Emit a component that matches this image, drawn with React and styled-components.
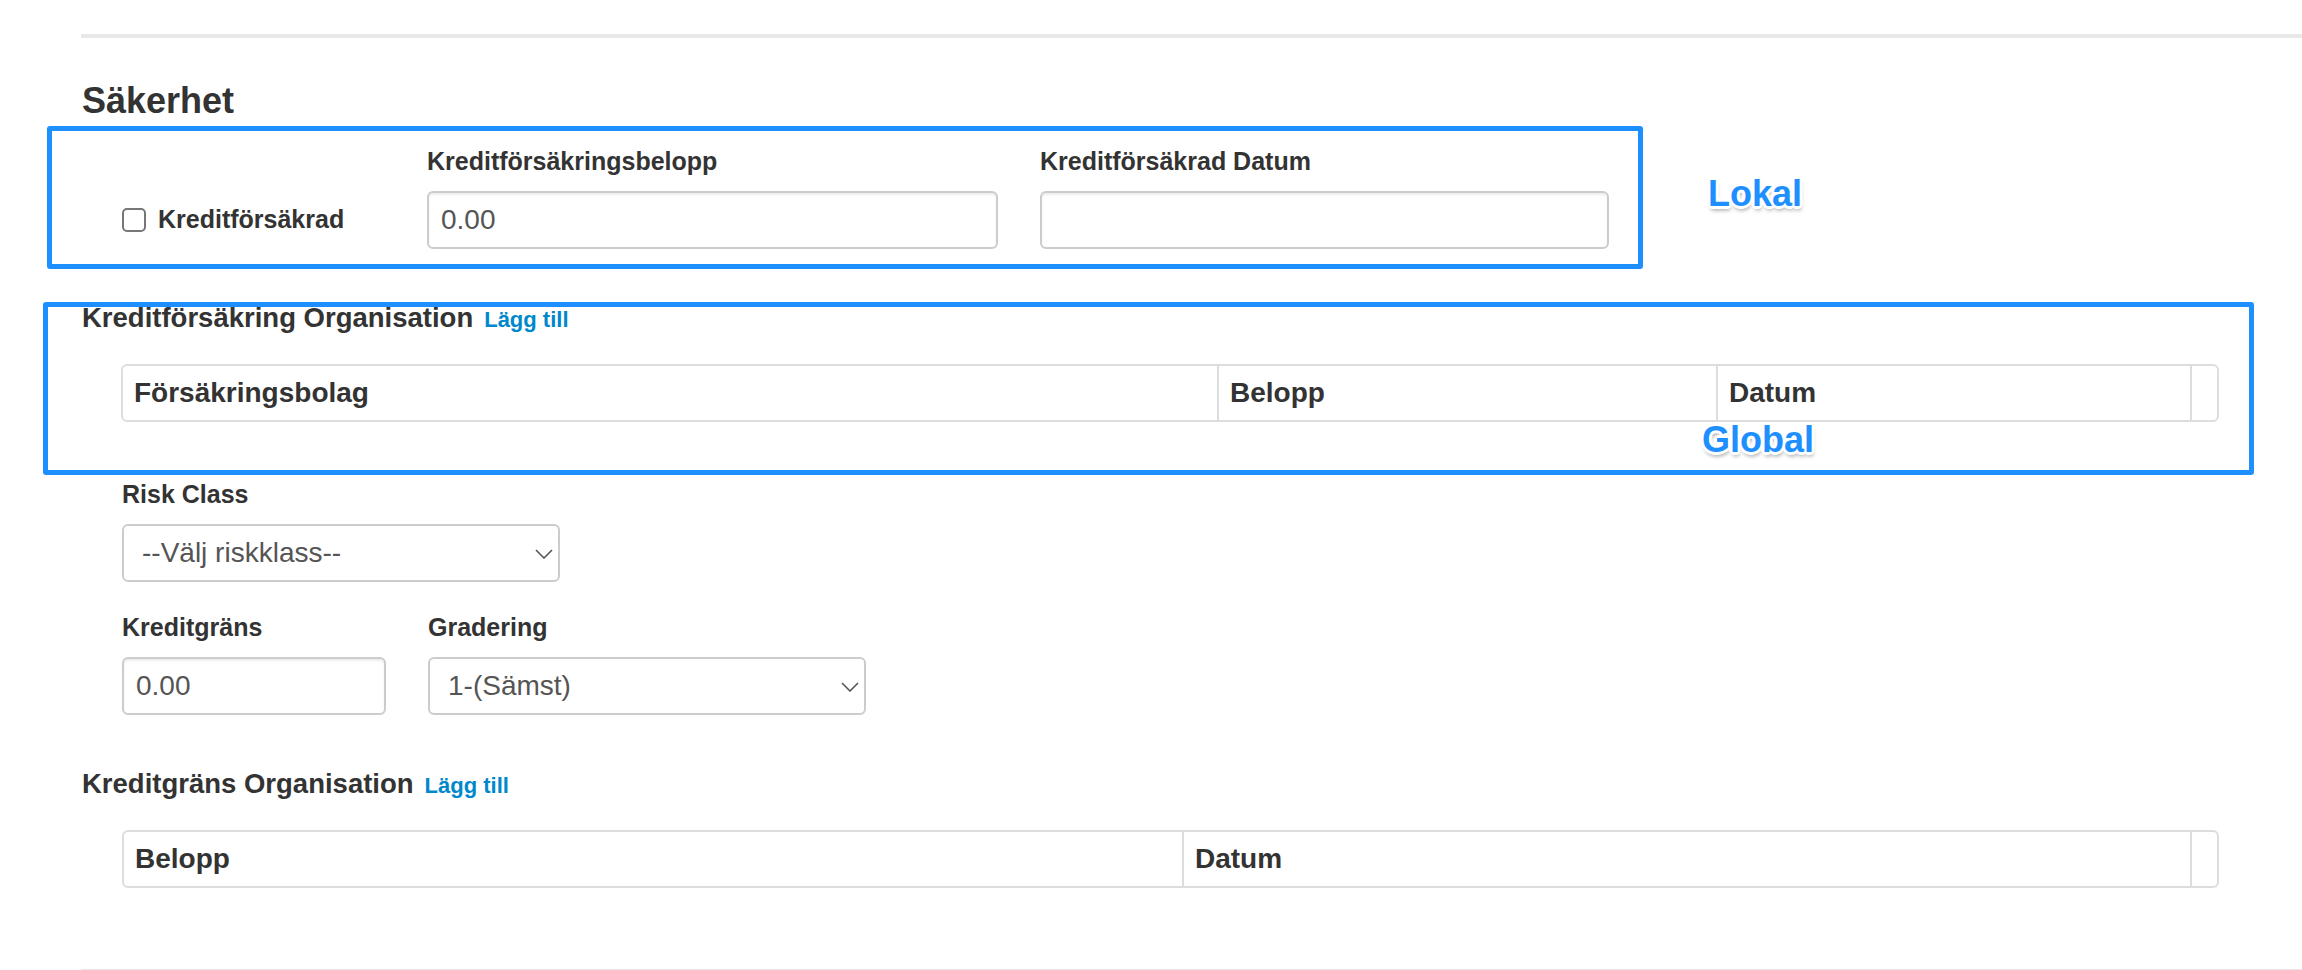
import React from 'react';
import styled, { createGlobalStyle } from 'styled-components';

const GlobalStyle = createGlobalStyle`
  body {
    margin: 0;
    background: #fff;
    font-family: "Liberation Sans", Arial, Helvetica, sans-serif;
    color: #333;
  }
`;

const Page = styled.div`
  height: 970px;
  padding-top: 34px;
  box-sizing: border-box;
  overflow: hidden;
`;

const Rule = styled.div`
  margin: ${({ top }) => top || 0}px 0 0 81px;
  height: 4px;
  background: #e8e8e8;
`;

const Content = styled.div`
  padding: 0 83px 0 82px;
`;

const Title = styled.h3`
  margin: 42.5px 0 0;
  font-size: 36px;
  line-height: 40px;
  font-weight: bold;
`;

const Annotated = styled.div`
  position: relative;
  margin-top: ${({ top }) => top}px;
`;

const Frame = styled.div`
  position: absolute;
  top: ${({ y }) => y}px;
  left: ${({ x }) => x}px;
  width: ${({ w }) => w}px;
  height: ${({ h }) => h}px;
  box-sizing: border-box;
  border: 5px solid #1e8fff;
  border-radius: 3px;
  pointer-events: none;
`;

const Tag = styled.span`
  position: absolute;
  top: ${({ y }) => y}px;
  left: ${({ x }) => x}px;
  font-size: 36px;
  line-height: 40px;
  font-weight: bold;
  color: #1e8fff;
  text-shadow: -2px -2px 0 #fff, 2px -2px 0 #fff, -2px 2px 0 #fff, 2px 2px 0 #fff,
    0 -3px 0 #fff, 0 3px 0 #fff, -3px 0 0 #fff, 3px 0 0 #fff,
    1px 4px 4px rgba(0, 0, 0, 0.4);
`;

const FieldRow = styled.div`
  display: flex;
  align-items: flex-end;
  gap: 42px;
  padding-left: 40px;
  margin-top: ${({ top }) => top || 0}px;
`;

const Field = styled.div`
  display: flex;
  flex-direction: column;
  width: ${({ w }) => w}px;
`;

const Label = styled.label`
  display: block;
  margin-bottom: 15.7px;
  font-size: 25px;
  line-height: 28px;
  font-weight: bold;
`;

const Input = styled.input`
  box-sizing: border-box;
  width: 100%;
  height: 58px;
  padding: 0 12px;
  border: 2px solid #ccc;
  border-radius: 6px;
  box-shadow: inset 0 2px 2px rgba(0, 0, 0, 0.075);
  font-family: inherit;
  font-size: 28px;
  color: #555;
  background: #fff;
  outline: none;
`;

const CheckCol = styled.label`
  display: flex;
  align-items: center;
  gap: 12px;
  width: 263px;
  height: 58px;
  font-size: 25px;
  font-weight: bold;
`;

const CheckBox = styled.input`
  appearance: none;
  box-sizing: border-box;
  width: 24px;
  height: 24px;
  margin: 0;
  border: 2px solid #777;
  border-radius: 5px;
  background: #fff;
`;

const SelectWrap = styled.div`
  position: relative;
  width: 100%;
`;

const Select = styled.select`
  appearance: none;
  box-sizing: border-box;
  width: 100%;
  height: 58px;
  padding: 0 40px 0 18px;
  border: 2px solid #ccc;
  border-radius: 6px;
  font-family: inherit;
  font-size: 28px;
  color: #555;
  background: #fff;
  outline: none;
`;

const Chevron = styled.svg`
  position: absolute;
  top: 25px;
  right: 7px;
  width: 18px;
  height: 10px;
  pointer-events: none;
`;

const Heading = styled.h4`
  margin: 0;
  font-size: 27.5px;
  line-height: 32px;
  font-weight: bold;
`;

const AddLink = styled.a`
  margin-left: 11px;
  font-size: 22px;
  font-weight: bold;
  color: #0088cc;
  text-decoration: none;
  cursor: pointer;
`;

const Table = styled.div`
  display: grid;
  grid-template-columns: ${({ cols }) => cols};
  margin: 27.5px 0 0 ${({ indent }) => indent}px;
  border: 2px solid #ddd;
  border-radius: 6px;
`;

const HeadCell = styled.div`
  display: flex;
  align-items: center;
  height: 54px;
  padding: 0 11px;
  border-left: ${({ first }) => (first ? 'none' : '2px solid #ddd')};
  font-size: 28px;
  font-weight: bold;
`;

const Arrow = () => (
  <Chevron viewBox="0 0 18 10">
    <path d="M1 1 L9 9 L17 1" fill="none" stroke="#555" strokeWidth="1.6" />
  </Chevron>
);

const Dropdown = ({ value }) => (
  <SelectWrap>
    <Select defaultValue={value}>
      <option>{value}</option>
    </Select>
    <Arrow />
  </SelectWrap>
);

const HeaderTable = ({ cols, indent, headers }) => (
  <Table cols={cols} indent={indent}>
    {headers.map((h, i) => (
      <HeadCell key={i} first={i === 0}>
        {h}
      </HeadCell>
    ))}
  </Table>
);

export default function App() {
  return (
    <Page>
      <GlobalStyle />
      <Rule />
      <Content>
        <Title>Säkerhet</Title>

        <Annotated top={26.8}>
          <Frame x={-35} y={-21} w={1596} h={143} />
          <Tag x={1626} y={27}>Lokal</Tag>
          <FieldRow>
            <CheckCol>
              <CheckBox type="checkbox" />
              Kreditförsäkrad
            </CheckCol>
            <Field w={571}>
              <Label>Kreditförsäkringsbelopp</Label>
              <Input defaultValue="0.00" />
            </Field>
            <Field w={569}>
              <Label>Kreditförsäkrad Datum</Label>
              <Input />
            </Field>
          </FieldRow>
        </Annotated>

        <Annotated top={53.5}>
          <Frame x={-39} y={-0.5} w={2211} h={173} />
          <Tag x={1620} y={118}>Global</Tag>
          <Heading>
            Kreditförsäkring Organisation
            <AddLink>Lägg till</AddLink>
          </Heading>
          <HeaderTable
            cols="1094px 499px 474px 1fr"
            indent={39}
            headers={['Försäkringsbolag', 'Belopp', 'Datum', '']}
          />
        </Annotated>

        <FieldRow top={58.3}>
          <Field w={438}>
            <Label>Risk Class</Label>
            <Dropdown value="--Välj riskklass--" />
          </Field>
        </FieldRow>

        <FieldRow top={31.3}>
          <Field w={264}>
            <Label>Kreditgräns</Label>
            <Input defaultValue="0.00" />
          </Field>
          <Field w={438}>
            <Label>Gradering</Label>
            <Dropdown value="1-(Sämst)" />
          </Field>
        </FieldRow>

        <Heading style={{ marginTop: 53.5 }}>
          Kreditgräns Organisation
          <AddLink>Lägg till</AddLink>
        </Heading>
        <HeaderTable
          cols="1058px 1008px 1fr"
          indent={40}
          headers={['Belopp', 'Datum', '']}
        />
      </Content>
      <Rule top={81} />
    </Page>
  );
}
